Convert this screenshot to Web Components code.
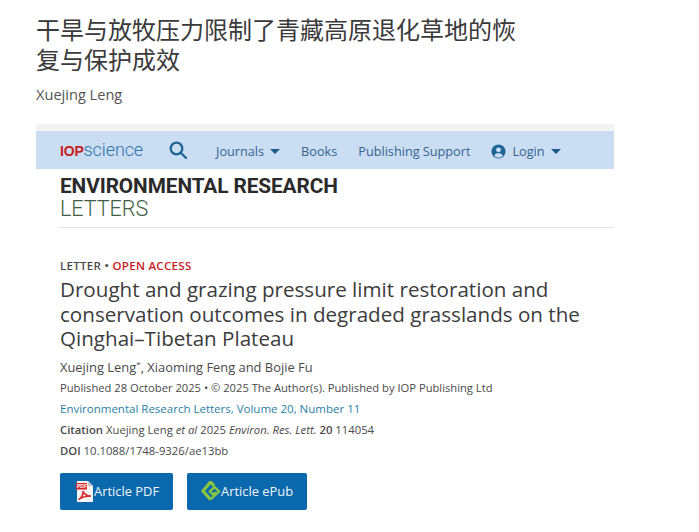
<!DOCTYPE html>
<html lang="zh">
<head>
<meta charset="UTF-8">
<title>干旱与放牧压力</title>
<style>
  html, body { margin:0; background:#fff; }
  body { font-family:"Open Sans","Noto Sans CJK SC",sans-serif; }
</style>
</head>
<body>
<template id="post-tmpl">
  <style>
    :host { display:block; padding:14px 0 0 36px; width:663px; box-sizing:border-box; }
    h1 { margin:0; width:490px; font:400 24px/30px "Noto Sans CJK SC",sans-serif; color:#3a3a3a; }
    .by { margin-top:10px; font-size:14.600px; line-height:20px; color:#555; white-space:nowrap; }
    .shot { margin-top:27px; width:578px; }
  </style>
  <h1><slot name="title"></slot></h1>
  <div class="by"><slot name="by"></slot></div>
  <div class="shot"><slot></slot></div>
</template>

<template id="nav-tmpl">
  <style>
    :host { display:flex; align-items:center; height:38px; margin-top:7px; background:#cbddf3; padding-left:24px; color:#33658f; font-size:12.700px; box-shadow:0 -7px 0 #f3f3f3; }
    .logo { font:300 18px/1 "Roboto",sans-serif; color:#2a73a8; width:109px; white-space:nowrap; letter-spacing:-.1px; }
    .logo b { color:#c8201f; font:900 14px/1 "Liberation Sans",sans-serif; letter-spacing:-.2px; }
    svg { display:block; }
    .search { margin-right:29px; }
    .item { display:flex; align-items:center; margin-right:21px; padding-top:2px; white-space:nowrap; }
    .caret { width:0; height:0; margin-left:6px; border:5px solid transparent; border-top:5px solid #1d5a8c; border-bottom:0; }
    .user { margin-right:6px; }
  </style>
  <span class="logo"><b>IOP</b>science</span>
  <svg class="search" width="18" height="18" viewBox="0 0 18 18" fill="none" stroke="#1e6595" stroke-width="2.300"><circle cx="7.500" cy="7.500" r="5.800"/><path d="M11.800 11.800 17 17" stroke-linecap="round"/></svg>
  <span class="item">Journals <i class="caret"></i></span>
  <span class="item">Books</span>
  <span class="item">Publishing Support</span>
  <span class="item">
    <svg class="user" width="15" height="15" viewBox="0 0 16 16"><circle cx="8" cy="8" r="7.500" fill="#1e6595"/><circle cx="8" cy="6.200" r="2.600" fill="#cbddf3"/><path d="M3.400 12.400C4.200 10.400 6 9.800 8 9.800s3.800.6 4.600 2.600A6 6 0 0 1 3.400 12.400Z" fill="#cbddf3"/></svg>
    Login <i class="caret"></i>
  </span>
</template>

<template id="mast-tmpl">
  <style>
    :host { display:block; margin-left:24px; padding:6px 0 6px; border-bottom:1px solid #e2e2e2; }
    .a { font:700 20.800px/22px "Roboto",sans-serif; color:#2a2a2a; white-space:nowrap; letter-spacing:-.1px; }
    .b { font:300 21.500px/24px "Roboto",sans-serif; color:#3f6146; white-space:nowrap; }
  </style>
  <div class="a"><slot name="a"></slot></div>
  <div class="b"><slot name="b"></slot></div>
</template>

<template id="meta-tmpl">
  <style>
    :host { display:block; margin-left:24px; padding-top:30px; color:#4a4a4a; }
    .kind { font-size:11.500px; line-height:16px; font-weight:600; color:#4a4a4a; letter-spacing:.3px; white-space:nowrap; }
    .kind em { font-style:normal; color:#c8201f; }
    h2 { margin:3px 0 0; font:400 20.600px/24.500px "Open Sans",sans-serif; color:#3c3c3c; width:540px; }
    .authors { margin-top:7px; font-size:12.900px; line-height:19px; white-space:nowrap; }
    sup { font-size:8px; line-height:0; }
    .l { font-size:11.300px; line-height:21px; white-space:nowrap; }
    .pub { font-size:11.200px; }
    .link { color:#2a7fa8; font-size:11.500px; }
    b { font-weight:600; }
  </style>
  <div class="kind">LETTER • <em>OPEN ACCESS</em></div>
  <h2>Drought and grazing pressure limit restoration and conservation outcomes in degraded grasslands on the Qinghai–Tibetan Plateau</h2>
  <div class="authors">Xuejing Leng<sup>*</sup>, Xiaoming Feng and Bojie Fu</div>
  <div class="l pub">Published 28 October 2025 • © 2025 The Author(s). Published by IOP Publishing Ltd</div>
  <div class="l link">Environmental Research Letters, Volume 20, Number 11</div>
  <div class="l"><b>Citation</b> Xuejing Leng <i>et al</i> 2025 <i>Environ. Res. Lett.</i> <b>20</b> 114054</div>
  <div class="l"><b>DOI</b> 10.1088/1748-9326/ae13bb</div>
</template>

<template id="btn-tmpl">
  <style>
    :host { display:inline-flex; align-items:center; justify-content:center; height:37px; padding:0 14px; box-sizing:border-box; background:#0a69ad; border-radius:2px; color:#f2f6fa; font-size:12.900px; white-space:nowrap; }
    ::slotted(svg) { display:block; margin-right:0; }
  </style>
  <slot></slot>
</template>

<post-page>
  <span slot="title">干旱与放牧压力限制了青藏高原退化草地的恢复与保护成效</span>
  <span slot="by">Xuejing Leng</span>
  <site-nav></site-nav>
  <journal-mast><span slot="a">ENVIRONMENTAL RESEARCH</span><span slot="b">LETTERS</span></journal-mast>
  <article-meta></article-meta>
  <div style="display:flex;gap:14px;margin:12px 0 0 24px">
    <action-btn>
      <svg width="20" height="21" viewBox="0 0 20 21"><path d="M3 0h11l5 5v16H3z" fill="#f6f6f6"/><path d="M14 0l5 5h-5z" fill="#c4c4c4"/><rect x="2" y="2" width="11" height="6.500" fill="#d5262b"/><text x="3" y="7.200" font-family="Liberation Sans, sans-serif" font-size="5" font-weight="700" fill="#fff">PDF</text><path d="M4.500 18.500c3-1.500 5-5.500 4.500-8.500 1 3 3.500 5 8 5-4.500 0-9 1-12.500 3.500Z" fill="none" stroke="#d5262b" stroke-width="1.500"/></svg>
      Article PDF
    </action-btn>
    <action-btn>
      <svg width="20" height="20" viewBox="0 0 20 20" fill="none" stroke="#8cc63f" stroke-linejoin="miter"><path d="M13 4.500 9.500 1 2 10l7.500 8.500" stroke-width="3.200"/><path d="M9.500 18.500 18 10.500 13.500 6 9 10.500l3 3 2.500-2.500" stroke-width="2.400"/></svg>
      Article ePub
    </action-btn>
  </div>
</post-page>

<script>
  class TmplElement extends HTMLElement {
    connectedCallback() {
      if (this.shadowRoot) return;
      const tmpl = document.getElementById(this.constructor.tmpl);
      this.attachShadow({ mode: 'open' }).appendChild(tmpl.content.cloneNode(true));
    }
  }
  class PostPage extends TmplElement { static tmpl = 'post-tmpl'; }
  class SiteNav extends TmplElement { static tmpl = 'nav-tmpl'; }
  class JournalMast extends TmplElement { static tmpl = 'mast-tmpl'; }
  class ArticleMeta extends TmplElement { static tmpl = 'meta-tmpl'; }
  class ActionBtn extends TmplElement { static tmpl = 'btn-tmpl'; }
  customElements.define('post-page', PostPage);
  customElements.define('site-nav', SiteNav);
  customElements.define('journal-mast', JournalMast);
  customElements.define('article-meta', ArticleMeta);
  customElements.define('action-btn', ActionBtn);
</script>
</body>
</html>
